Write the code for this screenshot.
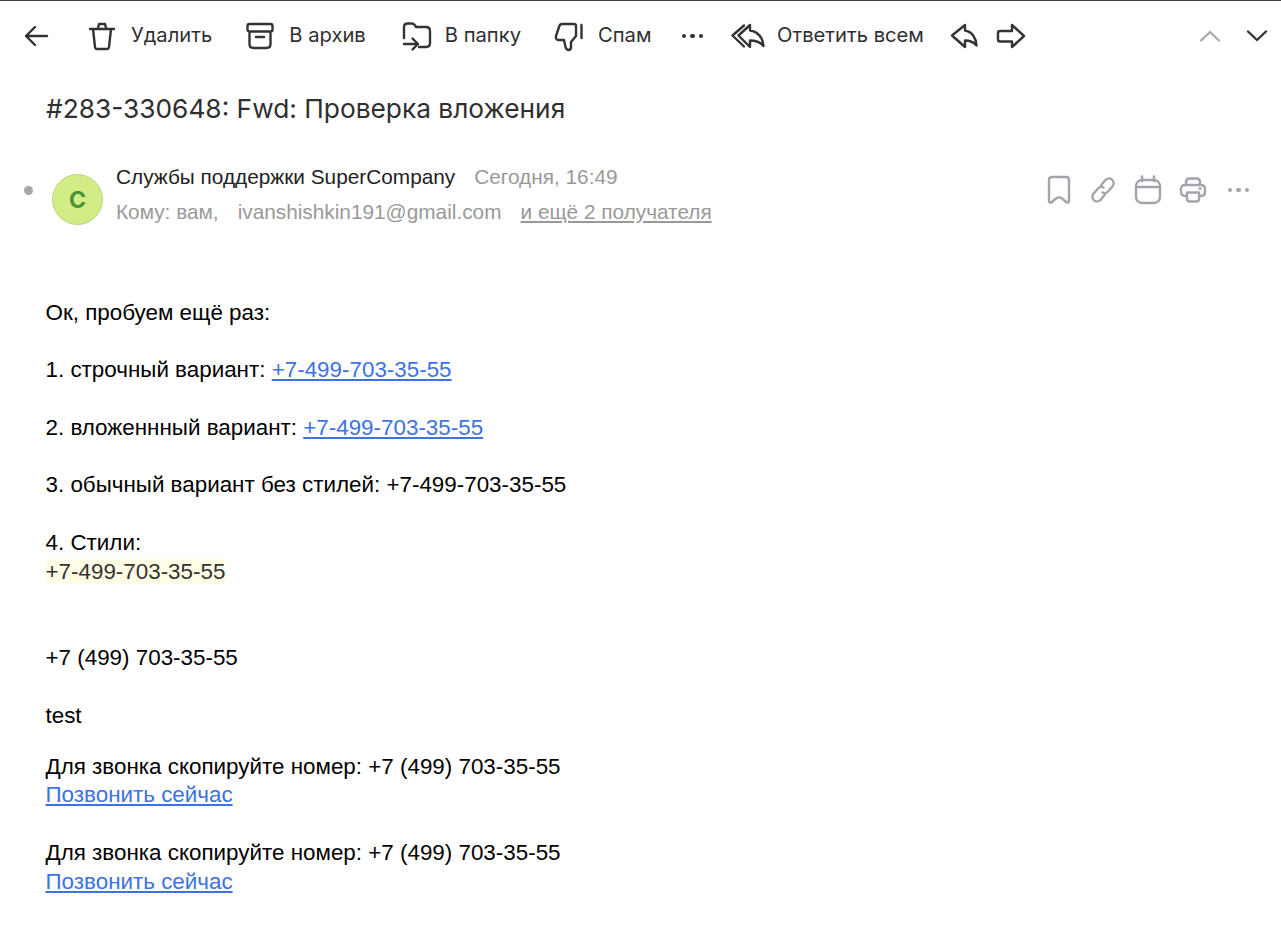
<div class="page">
  <header class="toolbar">
    <button class="icon back" aria-label="Назад">
      <svg width="26" height="26" viewBox="0 0 26 26"><path d="M24 13H3M12 4l-9 9 9 9" /></svg>
    </button>
    <button class="tool del">
      <svg width="28" height="30" viewBox="0 0 28 30"><path d="M2 8h24M10 7l1-4h6l1 4M5 8l2 18c.1 1.200 1 2 2.200 2h9.600c1.200 0 2.100-.8 2.200-2l2-18" /></svg>
      <span>Удалить</span>
    </button>
    <button class="tool arch">
      <svg width="28" height="28" viewBox="0 0 28 28"><path d="M3.500 2h21c1.200 0 2 .8 2 2v3.500c0 1-.8 2-2 2h-21c-1.200 0-2-1-2-2V4c0-1.200.8-2 2-2zM3.500 9.500V22c0 2.500 1.500 4 4 4h13c2.500 0 4-1.500 4-4V9.500M10 15h8" /></svg>
      <span>В архив</span>
    </button>
    <button class="tool folder">
      <svg width="32" height="32" viewBox="0 0 32 32"><path d="M3 18V7c0-2 1.500-3.500 3.500-3.500H11c1.500 0 2.500 1 3.500 2.500l.5 1h10c2.500 0 4 1.500 4 4v12c0 2.500-1.500 4-4 4h-7M3 24h14M11.500 18.500l5.500 5.500-5.500 5.500" /></svg>
      <span>В папку</span>
    </button>
    <button class="tool spam">
      <svg width="32" height="32" viewBox="0 0 32 32"><path d="M10 4h12c1 0 2 1 2 2v10l-5 6v5c0 2-1 3-2.500 3s-2-.5-3-3l-1.500-7H6.500C4.500 20 3.500 18 4 16L7 7c.5-2 1.500-3 3-3zM29.500 5v13" /></svg>
      <span>Спам</span>
    </button>
    <div class="dots" aria-label="Ещё"><i></i><i></i><i></i></div>
    <button class="tool all">
      <svg width="34" height="26" viewBox="0 0 34 26"><path d="M19 2 7.500 12.500 19 24v-6.500c6 0 10 1.500 13.500 5.500C32 15 27 8.500 19 7.500zM13 2.500 1.500 12.500 13 23.500" /></svg>
      <span>Ответить всем</span>
    </button>
    <button class="icon reply" aria-label="Ответить">
      <svg width="28" height="26" viewBox="0 0 28 26"><path d="M15 2 2 12.500 15 24v-6.500c5 0 8 1 11.500 5C26 15 22 8.500 15 7.500z" /></svg>
    </button>
    <button class="icon forward" aria-label="Переслать">
      <svg width="30" height="26" viewBox="0 0 30 26"><path d="M16 2l12 11-12 11v-5.500H4c-1.200 0-2-.8-2-2V10c0-1.200.8-2 2-2h12z" /></svg>
    </button>
    <div class="spacer"></div>
    <button class="icon up" aria-label="Предыдущее">
      <svg width="22" height="14" viewBox="0 0 22 14"><path d="M2 11.500 11 3l9 8.500" /></svg>
    </button>
    <button class="icon down" aria-label="Следующее">
      <svg width="22" height="14" viewBox="0 0 22 14"><path d="M2 2.500 11 11l9-8.500" /></svg>
    </button>
  </header>

  <h1>#283-330648: Fwd: Проверка вложения</h1>

  <section class="meta">
    <span class="unread"></span>
    <div class="avatar">С</div>
    <div class="who">
      <div class="from"><span class="name">Службы поддержки SuperCompany</span><span class="date">Сегодня, 16:49</span></div>
      <div class="to"><span>Кому: вам,</span><span class="addr">ivanshishkin191@gmail.com</span><span class="more">и ещё 2 получателя</span></div>
    </div>
    <div class="actions">
      <svg width="26" height="30" viewBox="0 0 26 30"><path d="M3 5c0-2 1.500-3 3-3h14c1.500 0 3 1 3 3v21c0 1.500-1.500 2-2.500 1.200L16 23.500c-2-1.500-4-1.500-6 0l-4.500 3.700C4.500 28 3 27.500 3 26z" /></svg>
      <svg width="28" height="28" viewBox="0 0 28 28"><path d="M12 9.500l4-5c2-2.300 5-2.500 7-.8s2.300 4.700.4 6.800l-4.400 5c-1.500 1.800-4 2-5.500 1M16 18.500l-4 5c-2 2.300-5 2.500-7 .8s-2.300-4.700-.4-6.800l4.400-5c1.500-1.800 4-2 5.500-1" /></svg>
      <svg width="28" height="30" viewBox="0 0 28 30"><rect x="2" y="5" width="24" height="23" rx="6" /><path d="M2 12h24M8 1.500V6M20 1.500V6" /></svg>
      <svg width="28" height="28" viewBox="0 0 28 28"><path d="M7 9V6c0-2 1.500-3.500 3.500-3.500h7C19.500 2.500 21 4 21 6v3M7 20H6c-2.500 0-4-1.500-4-4v-3c0-2.500 1.500-4 4-4h16c2.500 0 4 1.500 4 4v3c0 2.500-1.500 4-4 4h-1M8 16.500h12V23c0 1.500-1 2.500-2.500 2.500h-7C9 25.500 8 24.500 8 23zM20.500 12.500h1" /></svg>
      <div class="dots small"><i></i><i></i><i></i></div>
    </div>
  </section>

  <article class="body">
    <p>Ок, пробуем ещё раз:</p>
    <p>1. строчный вариант: <a href="#a">+7-499-703-35-55</a></p>
    <p>2. вложеннный вариант: <a href="#a">+7-499-703-35-55</a></p>
    <p>3. обычный вариант без стилей: +7-499-703-35-55</p>
    <p class="styled">4. Стили:<br /><span class="mark">+7-499-703-35-55</span></p>
    <p>+7 (499) 703-35-55</p>
    <p class="test">test</p>
    <p class="call">Для звонка скопируйте номер: +7 (499) 703-35-55<br /><a href="#a">Позвонить сейчас</a></p>
    <p class="call">Для звонка скопируйте номер: +7 (499) 703-35-55<br /><a href="#a">Позвонить сейчас</a></p>
  </article>
</div>

<style>
  :global(body) {
    background: #fff;
  }
  .page {
    border-top: 1px solid #3b3f4a;
    height: 924px;
    overflow: hidden;
    font-family: "Inter", "Liberation Sans", sans-serif;
    color: #303030;
  }
  button {
    border: 0;
    background: none;
    padding: 0;
    display: flex;
    align-items: center;
    font: inherit;
    color: inherit;
  }
  svg {
    fill: none;
    stroke: #333;
    stroke-width: 2.400;
    stroke-linecap: round;
    stroke-linejoin: round;
    flex: none;
  }
  .toolbar {
    display: flex;
    align-items: center;
    height: 70px;
    padding-left: 23px;
    padding-right: 13px;
  }
  .tool {
    font-size: 20.200px;
    white-space: nowrap;
  }
  .tool span { margin-bottom: 3px; }
  .del { margin-left: 39px; gap: 15px; }
  .arch { margin-left: 34px; gap: 15px; }
  .folder { margin-left: 35px; gap: 12px; }
  .spam { margin-left: 31px; gap: 14px; }
  .all { margin-left: 28px; gap: 12px; }
  .reply { margin-left: 26px; }
  .forward { margin-left: 18px; }
  .spacer { flex: 1; }
  .up svg { stroke: #aaa; }
  .down { margin-left: 25px; }
  .dots {
    display: flex;
    gap: 4px;
    margin-left: 30px;
  }
  .dots i {
    width: 4.500px;
    height: 4.500px;
    border-radius: 50%;
    background: #333;
  }
  h1 {
    margin: 0;
    padding: 22px 0 0 46px;
    font-size: 26.300px;
    font-weight: 400;
    line-height: 32px;
    color: #2f2f2f;
  }
  .meta {
    display: flex;
    align-items: flex-start;
    margin-top: 40px;
    padding-left: 24px;
    padding-right: 32px;
    font-family: "Liberation Sans", sans-serif;
    font-size: 20.800px;
  }
  .unread {
    width: 9px;
    height: 9px;
    border-radius: 50%;
    background: #a6a6ad;
    margin-top: 21px;
  }
  .avatar {
    width: 51px;
    height: 51px;
    box-sizing: border-box;
    border: 1px solid #b5d87d;
    background: #d2ec86;
    border-radius: 50%;
    margin: 9px 0 0 19px;
    display: flex;
    align-items: center;
    justify-content: center;
    color: #4a9436;
    font: 700 23px "Inter", sans-serif;
    flex: none;
  }
  .who {
    margin-left: 13px;
    flex: 1;
  }
  .from {
    line-height: 24px;
    display: flex;
    gap: 19px;
  }
  .name { color: #222; }
  .date { color: #999; }
  .to {
    color: #999;
    line-height: 24px;
    margin-top: 11px;
    display: flex;
  }
  .addr { margin-left: 19px; }
  .more {
    margin-left: 19px;
    text-decoration: underline;
  }
  .actions {
    display: flex;
    align-items: center;
    gap: 17px;
    margin-top: 10px;
  }
  .actions svg { stroke: #a3a3ab; }
  .dots.small { margin-left: 4px; }
  .dots.small i { background: #a3a3ab; }
  .body {
    margin-top: 73.700px;
    padding-left: 45.500px;
    font-family: "Liberation Sans", sans-serif;
    font-size: 22.400px;
    line-height: 28.800px;
    color: #000;
  }
  .body p {
    margin: 0 0 28.800px;
  }
  .body a {
    color: #3c72e4;
    text-decoration: underline;
  }
  .mark {
    background: #fffde6;
    color: #333;
  }
  .styled {
    margin-bottom: 57.600px !important;
  }
  .test {
    margin-bottom: 22px !important;
  }
</style>
